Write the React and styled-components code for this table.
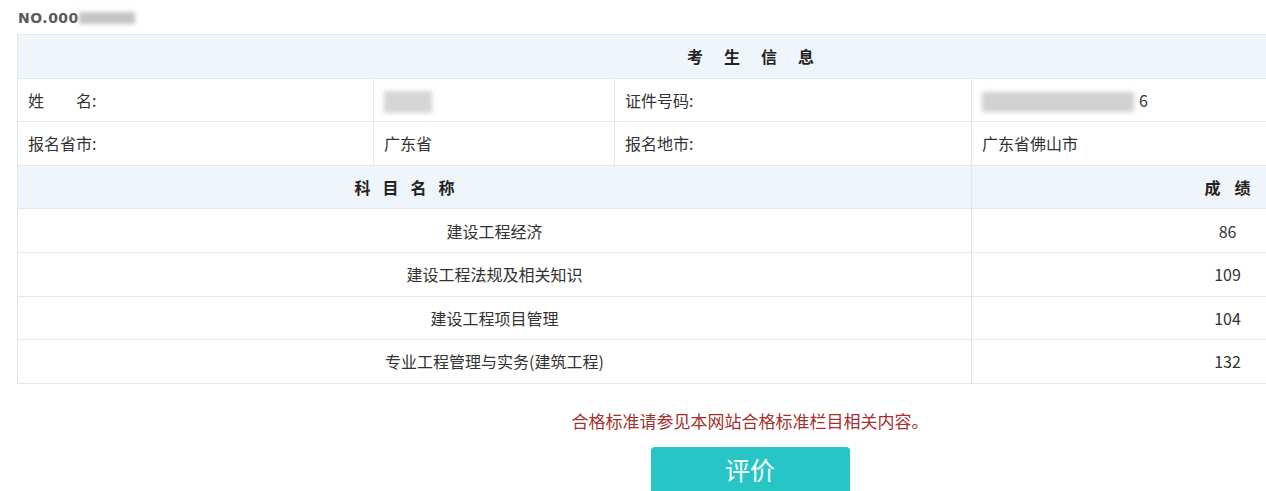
import styled, { createGlobalStyle } from 'styled-components';

const GlobalStyle = createGlobalStyle`
  html, body {
    margin: 0;
    padding: 0;
    background: #fff;
    overflow: hidden;
  }
  body {
    font-family: "Noto Sans CJK SC", "Liberation Sans", sans-serif;
    color: #333;
  }
`;

const Frame = styled.div`
  width: 100vw;
  height: 100vh;
  overflow: hidden;
`;

const Page = styled.div`
  width: 1466px;
  padding: 9px 0 0 17px;
`;

const Serial = styled.div`
  display: flex;
  align-items: center;
  height: 18px;
  margin-bottom: 7px;
  padding-left: 1px;
  font-family: "DejaVu Sans", "Liberation Sans", sans-serif;
  font-weight: 700;
  font-size: 14px;
  color: #5a5a5a;
  letter-spacing: 0.5px;
`;

const Blur = styled.span`
  display: inline-block;
  width: ${(p) => p.w}px;
  height: ${(p) => p.h}px;
  background: ${(p) => p.color || '#cfcfcf'};
  filter: blur(2px);
  vertical-align: middle;
`;

const Table = styled.table`
  width: 1466px;
  border-collapse: collapse;
  table-layout: fixed;
  font-size: 16px;
  td,
  th {
    border: 1px solid #e4e7ea;
    height: 43.6px;
    padding: 0 10px;
    box-sizing: border-box;
  }
`;

const Head = styled.th`
  background: #eef5fb;
  color: #222;
  font-weight: 700;
  text-align: ${(p) => p.align || 'center'};
  letter-spacing: ${(p) => p.spacing}px;
  padding-left: ${(p) => 10 + p.spacing}px !important;
  padding-right: ${(p) => p.pr || 10}px !important;
`;

const Cell = styled.td`
  text-align: ${(p) => p.align || 'left'};
  color: #333;
  white-space: pre;
`;

const Notice = styled.p`
  margin: 24px 0 0;
  text-align: center;
  font-size: 17px;
  color: #a3312d;
`;

const Actions = styled.div`
  display: flex;
  justify-content: center;
  margin-top: 14px;
`;

const RateButton = styled.button`
  width: 199px;
  height: 52px;
  border: none;
  border-radius: 4px;
  background: #27c5c5;
  color: #fff;
  font-family: "Noto Sans CJK SC", sans-serif;
  font-size: 25px;
  padding: 0 0 8px;
  cursor: pointer;
`;

const subjects = [
  ['建设工程经济', 86],
  ['建设工程法规及相关知识', 109],
  ['建设工程项目管理', 104],
  ['专业工程管理与实务(建筑工程)', 132],
];

export default function App() {
  return (
    <>
      <GlobalStyle />
      <Frame>
        <Page>
          <Serial>
            NO.000
            <Blur w={56} h={12} color="#c4c4c4" />
          </Serial>
          <Table>
            <colgroup>
              <col style={{ width: 356 }} />
              <col style={{ width: 241 }} />
              <col style={{ width: 357 }} />
              <col style={{ width: 512 }} />
            </colgroup>
            <tbody>
              <tr>
                <Head colSpan={4} spacing={21}>
                  考生信息
                </Head>
              </tr>
              <tr>
                <Cell>{'姓　　名:'}</Cell>
                <Cell>
                  <Blur w={48} h={22} color="#d6d6d6" />
                </Cell>
                <Cell>证件号码:</Cell>
                <Cell>
                  <Blur w={152} h={20} color="#d2d2d2" />
                  <span style={{ marginLeft: 5 }}>6</span>
                </Cell>
              </tr>
              <tr>
                <Cell>报名省市:</Cell>
                <Cell>广东省</Cell>
                <Cell>报名地市:</Cell>
                <Cell>广东省佛山市</Cell>
              </tr>
              <tr>
                <Head colSpan={3} spacing={12} pr={190}>
                  科目名称
                </Head>
                <Head spacing={14}>成绩</Head>
              </tr>
              {subjects.map(([name, score]) => (
                <tr key={name}>
                  <Cell colSpan={3} align="center">
                    {name}
                  </Cell>
                  <Cell align="center">{score}</Cell>
                </tr>
              ))}
            </tbody>
          </Table>
          <Notice>合格标准请参见本网站合格标准栏目相关内容。</Notice>
          <Actions>
            <RateButton>评价</RateButton>
          </Actions>
        </Page>
      </Frame>
    </>
  );
}
